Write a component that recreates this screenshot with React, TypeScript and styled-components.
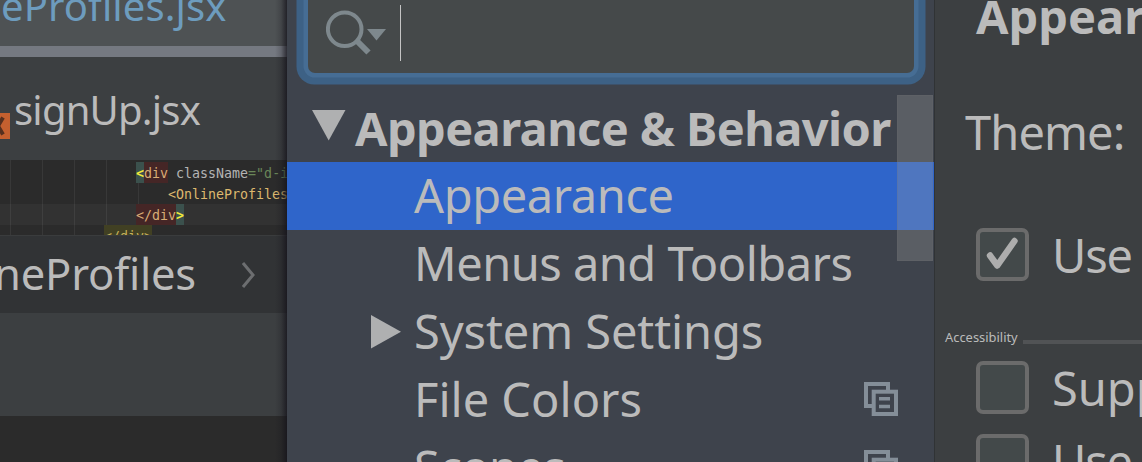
import React from 'react';
import styled, { createGlobalStyle, css } from 'styled-components';

interface TextProps {
    $size: number;
    $line: number;
    $track?: number;
    $bold?: boolean;
}

interface TreeItem {
    label: string;
    track: number;
    copyable?: boolean;
    collapsed?: boolean;
    selected?: boolean;
}

interface OptionProps {
    label: string;
    checked?: boolean;
    track?: number;
}

const treeItems: TreeItem[] = [
    { label: 'Appearance', track: -0.4, selected: true },
    { label: 'Menus and Toolbars', track: -0.5 },
    { label: 'System Settings', track: -0.1, collapsed: true },
    { label: 'File Colors', track: 0, copyable: true },
    { label: 'Scopes', track: -0.6, copyable: true },
];

const CopyIcon: React.FC = () => (
    <svg width="34" height="34" viewBox="0 0 34 34" fill="none" stroke="#848e98" strokeWidth="4">
        <path d="M24 8V2H2V24H8" />
        <rect x="9.7" y="9.7" width="22.3" height="22.3" />
        <path d="M15 16.7H26M15 24.5H26" strokeWidth="3.4" />
    </svg>
);

const Option: React.FC<OptionProps> = ({ label, checked, track = 0 }: OptionProps) => (
    <OptionRow>
        <CheckBox>
            {checked &&
                <svg width="45" height="45" viewBox="0 0 45 45" fill="none">
                    <path
                        d="M10 23.5L17.3 33.5L34.5 9"
                        stroke="#adadad"
                        strokeWidth="6.4"
                        strokeLinecap="round"
                        strokeLinejoin="round"
                    />
                </svg>
            }
        </CheckBox>
        <Text $size={47} $line={54} $track={track}>{label}</Text>
    </OptionRow>
);

const EditorPane: React.FC = () => (
    <Editor>
        <ActiveTab>
            <Text $size={40} $line={42} $track={0.1}>eProfiles.jsx</Text>
        </ActiveTab>

        <Tab>
            <FileIcon>
                <svg width="10" height="26" viewBox="0 0 10 26">
                    <path d="M-7 4.5L3 21.5M3 4.5L-7 21.5" stroke="#55301f" strokeWidth="4" />
                </svg>
            </FileIcon>
            <Text $size={40} $line={60} $track={-0.8}>signUp.jsx</Text>
        </Tab>

        <Code>
            <CodeLine $indent={136}>
                <Bracket>&lt;</Bracket><Matched>div</Matched>
                <Attribute> className</Attribute><Value>="d-i</Value>
            </CodeLine>
            <CodeLine $indent={168}>&lt;OnlineProfiles</CodeLine>
            <CodeLine $indent={136} $current>
                <Matched>&lt;/div</Matched><Bracket>&gt;</Bracket>
            </CodeLine>
            <CodeLine $indent={104}><Outer>&lt;/div&gt;</Outer></CodeLine>
        </Code>

        <Breadcrumbs>
            <Text $size={43.5} $line={75} $track={-0.2}>neProfiles</Text>
            <svg width="14" height="28" viewBox="0 0 14 28" fill="none">
                <path d="M1 2L11 14L1 26" stroke="#6c6e70" strokeWidth="3" />
            </svg>
        </Breadcrumbs>

        <StatusArea />
    </Editor>
);

const SettingsTree: React.FC = () => (
    <Sidebar>
        <SearchField>
            <svg width="62" height="50" viewBox="0 0 62 50" fill="none">
                <circle cx="18.7" cy="21.3" r="16.8" stroke="#7e888d" strokeWidth="4" />
                <path d="M30.5 32.5L42.5 44.5" stroke="#7e888d" strokeWidth="6" />
                <path d="M41 21H60L50.5 32.5Z" fill="#7e888d" />
            </svg>
            <Caret />
        </SearchField>

        <Tree>
            <GroupRow>
                <svg width="34" height="31" viewBox="0 0 34 31">
                    <path d="M0 0H33.5L16.7 30.5Z" fill="#afb0b1" />
                </svg>
                <Text $size={47} $line={66} $track={-0.6} $bold>Appearance &amp; Behavior</Text>
            </GroupRow>

            {treeItems.map(item =>
                <TreeRow key={item.label} $selected={item.selected}>
                    <Toggle>
                        {item.collapsed &&
                            <svg width="30" height="34" viewBox="0 0 30 34">
                                <path d="M0 0L30 16.8L0 33.5Z" fill="#afb0b1" />
                            </svg>
                        }
                    </Toggle>
                    <Text $size={47} $line={67} $track={item.track}>{item.label}</Text>
                    {item.copyable && <RowEnd><CopyIcon /></RowEnd>}
                </TreeRow>
            )}

            <ScrollThumb />
        </Tree>
    </Sidebar>
);

const AppearancePage: React.FC = () => (
    <Page>
        <PageTitle>
            <Text $size={47} $line={66} $bold>Appear</Text>
        </PageTitle>
        <ThemeRow>
            <Text $size={47} $line={67} $track={-0.9}>Theme:</Text>
        </ThemeRow>
        <Option label="Use" track={-1.2} checked />
        <SectionHeading>
            <Text $size={12.9} $line={18}>Accessibility</Text>
            <Rule />
        </SectionHeading>
        <Options>
            <Option label="Supp" />
            <Option label="Use" track={-1.2} />
        </Options>
    </Page>
);

const App: React.FC = () => (
    <Screen>
        <GlobalStyle />
        <EditorPane />
        <SettingsTree />
        <AppearancePage />
    </Screen>
);

const GlobalStyle = createGlobalStyle`
    * {
        box-sizing: border-box;
    }

    body {
        margin: 0;
        background: #3c3f41;
        overflow: hidden;
    }

    svg {
        display: block;
        flex: none;
    }
`;

const Screen = styled.main`
    display: grid;
    grid-template-columns: 287px 648px 207px;
    width: 1142px;
    height: 462px;
    overflow: hidden;
    color: #bbbbbb;
    font-family: "Noto Sans", "Open Sans", sans-serif;
`;

const Text = styled.span<TextProps>`
    font-size: ${p => p.$size}px;
    line-height: ${p => p.$line}px;
    letter-spacing: ${p => p.$track || 0}px;
    font-weight: ${p => p.$bold ? 700 : 400};
    white-space: nowrap;
`;

const Editor = styled.section`
    position: relative;
    display: flex;
    flex-direction: column;
    height: 462px;
    overflow: hidden;
    background: #2b2b2b;

    /* shadow cast by the dialog */
    &::after {
        content: '';
        position: absolute;
        inset: 0 0 0 auto;
        width: 12px;
        background: linear-gradient(to right, transparent, rgba(20, 18, 26, 0.2) 50%, rgba(20, 18, 26, 0.75));
    }
`;

const ActiveTab = styled.div`
    display: flex;
    align-items: flex-start;
    height: 57px;
    background: #4e5254;
    border-bottom: 11px solid #757981;
    color: #6d9cbe;

    span {
        margin: -15px 0 0 1px;
    }
`;

const Tab = styled.div`
    display: flex;
    gap: 4px;
    height: 103px;
    padding-top: 23px;
    background: #3c3f41;
`;

const FileIcon = styled.div`
    width: 10px;
    height: 26px;
    margin-top: 33px;
    background: #c4602f;
`;

const Code = styled.div`
    height: 75px;
    padding-top: 2px;
    overflow: hidden;
    font-family: "DejaVu Sans Mono", monospace;
    font-size: 13.3px;
    color: #dcb86e;
    background:
        linear-gradient(#383838, #383838) 10px 0 / 1px 100% no-repeat,
        linear-gradient(#383838, #383838) 42px 0 / 1px 100% no-repeat,
        linear-gradient(#383838, #383838) 74px 0 / 1px 100% no-repeat,
        linear-gradient(#383838, #383838) 106px 0 / 1px 100% no-repeat,
        linear-gradient(#383838, #383838) 138px 23px / 1px 21px no-repeat,
        #2b2b2b;
`;

const CodeLine = styled.div<{ $indent: number; $current?: boolean }>`
    display: flex;
    height: 21px;
    padding-left: ${p => p.$indent}px;
    line-height: 23px;
    white-space: pre;
    ${p => p.$current && css`
        background: rgba(255, 255, 255, 0.035);
    `}
`;

const Bracket = styled.span`
    background: #3b514d;
    color: #f2ea3a;
    font-weight: 700;
`;

const Matched = styled.span`
    background: #452626;
    color: #d8ad76;
`;

const Outer = styled.span`
    background: #414023;
    color: #c5b05a;
`;

const Attribute = styled.span`
    color: #b4b4b4;
`;

const Value = styled.span`
    color: #6a8759;
`;

const Breadcrumbs = styled.div`
    display: flex;
    align-items: flex-start;
    justify-content: space-between;
    height: 78px;
    padding-right: 31px;
    background: #313335;
    border-top: 1px solid #3a3c3d;

    span {
        margin-left: -6px;
    }

    svg {
        margin-top: 25px;
    }
`;

const StatusArea = styled.div`
    height: 103px;
    background: #3c3f41;
`;

const Sidebar = styled.aside`
    height: 462px;
    overflow: hidden;
    background: #3e434c;
    border-right: 1px solid #303335;
`;

const SearchField = styled.div`
    display: flex;
    align-items: flex-start;
    gap: 12px;
    width: 606px;
    height: 73px;
    margin: 0 21px 22px;
    padding: 8px 18px 0;
    background: #45494a;
    border-radius: 0 0 7px 7px;
    box-shadow: 0 0 0 4.5px #466d94, 0 0 0 11.5px #3d6185;
`;

const Caret = styled.div`
    width: 1px;
    height: 56px;
    margin-top: -3px;
    background: #c4c4c4;
`;

const Tree = styled.div`
    position: relative;
`;

const GroupRow = styled.div`
    display: flex;
    gap: 9px;
    height: 67px;
    padding-left: 25px;

    svg {
        margin-top: 15px;
    }
`;

const TreeRow = styled.div<{ $selected?: boolean }>`
    display: flex;
    height: 68px;
    background: ${p => p.$selected ? '#2f65ca' : 'transparent'};
`;

const Toggle = styled.div`
    width: 127px;
    padding: 17px 0 0 84px;
`;

const RowEnd = styled.div`
    margin: 16px 36px 0 auto;
`;

const ScrollThumb = styled.div`
    position: absolute;
    top: 0;
    right: 1px;
    width: 36px;
    height: 166px;
    background: rgba(166, 166, 166, 0.28);
    border: 1px solid rgba(110, 110, 110, 0.2);
`;

const Page = styled.section`
    height: 462px;
    overflow: hidden;
    background: #3c3f41;
`;

const PageTitle = styled.div`
    display: flex;
    align-items: flex-start;
    height: 99px;
    padding-left: 41px;

    span {
        margin-top: -17px;
    }
`;

const ThemeRow = styled.div`
    height: 129px;
    padding-left: 30px;
`;

const OptionRow = styled.label`
    display: flex;
    gap: 23px;
    height: 53px;
    padding-left: 41px;
`;

const CheckBox = styled.div`
    flex: none;
    width: 53px;
    height: 53px;
    background: #43494a;
    border: 4px solid #6b6b6b;
    border-radius: 7px;
`;

const SectionHeading = styled.div`
    display: flex;
    align-items: flex-start;
    gap: 5px;
    height: 37px;
    margin-top: 43px;
    padding-left: 10px;
    padding-top: 4px;
`;

const Rule = styled.div`
    flex: 1;
    height: 4px;
    margin-top: 12px;
    background: #515355;
`;

const Options = styled.div`
    display: flex;
    flex-direction: column;
    gap: 20px;
`;

export default App;
